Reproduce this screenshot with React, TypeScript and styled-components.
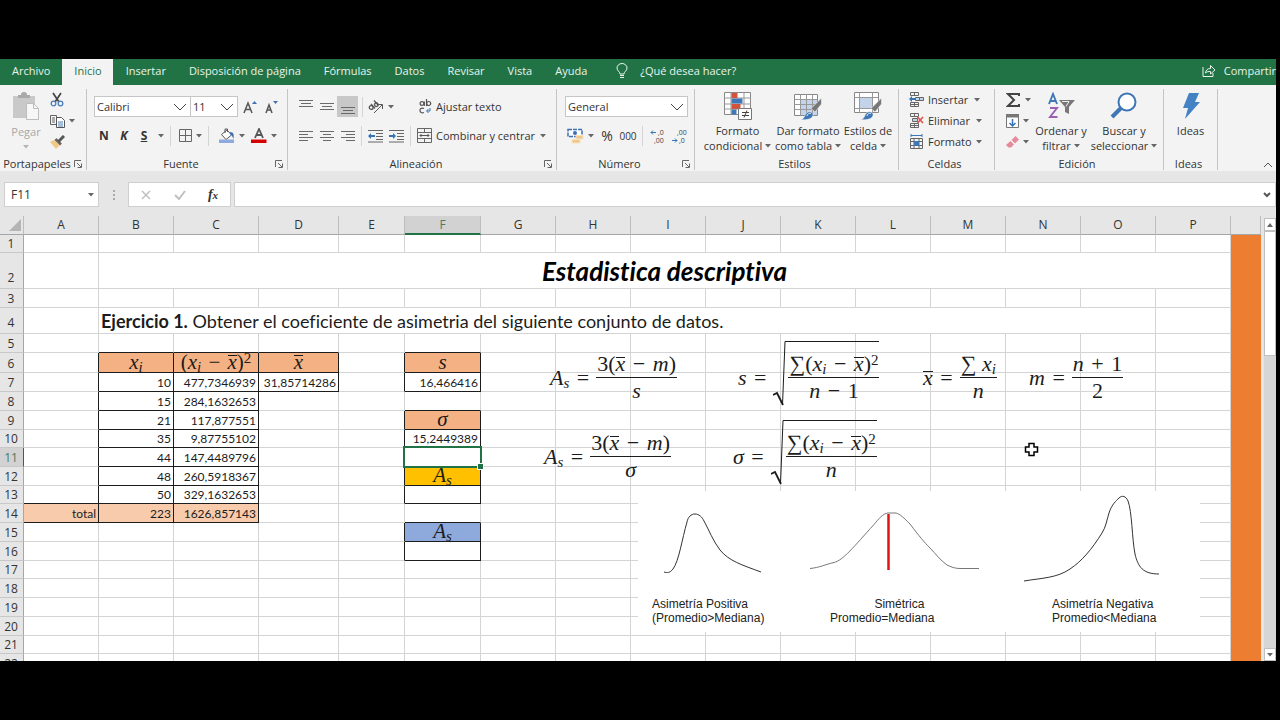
import React from "react";
import styled, { createGlobalStyle, css } from "styled-components";

const Global = createGlobalStyle`
  * { box-sizing: border-box; }
  body { margin: 0; background: #000; }
  button, input, select { font: inherit; color: inherit; margin: 0; }
`;

const UI = `"Open Sans", "Noto Sans", sans-serif`;
const SHEET = `Lato, "Open Sans", sans-serif`;
const MATH = `"Liberation Serif", "DejaVu Serif", serif`;

/* ---------- frame ---------- */

const Frame = styled.div`
  height: 100vh;
  display: flex;
  flex-direction: column;
  padding: 59px 4px 59px 0;
  background: #000;
  color: #333;
  font-family: ${UI};
  font-size: 11px;
  overflow: hidden;
`;

const TabBar = styled.nav`
  display: flex;
  flex: none;
  height: 26px;
  background: #217346;
  color: #e8f3ec;
`;

const Tab = styled.button<{ $active?: boolean }>`
  border: 0;
  padding: 0 11px 2px 12px;
  margin: ${(p) => (p.$active ? "0 1px" : "0")};
  line-height: 24px;
  white-space: nowrap;
  background: ${(p) => (p.$active ? "#f3f3f3" : "transparent")};
  color: ${(p) => (p.$active ? "#217346" : "inherit")};
`;

const Hint = styled.button`
  display: flex;
  align-items: center;
  gap: 12px;
  border: 0;
  padding: 0 0 3px;
  margin-left: 18px;
  background: transparent;
  white-space: nowrap;
`;

const Share = styled(Hint)`
  gap: 8px;
  margin-left: auto;
`;

/* ---------- ribbon ---------- */

const Ribbon = styled.div`
  display: flex;
  flex: none;
  height: 86px;
  padding: 4px 0 1px;
  background: #f3f3f3;
`;

const Group = styled.section<{ $w: number }>`
  display: flex;
  flex-direction: column;
  width: ${(p) => p.$w}px;
  border-right: 1px solid #c4c4c4;
`;

const GroupBody = styled.div<{ $pad?: number; $dir?: "row" | "column" }>`
  flex: 1;
  display: flex;
  flex-direction: ${(p) => p.$dir ?? "row"};
  padding: 0 0 0 ${(p) => p.$pad ?? 0}px;
`;

const GroupFoot = styled.div`
  display: flex;
  align-items: center;
  height: 13px;
  padding-right: 4px;
  line-height: 13px;
`;

const GroupName = styled.span`
  flex: 1;
  text-align: center;
  white-space: nowrap;
`;

const Plain = styled.button<{ $w?: number; $on?: boolean }>`
  display: flex;
  align-items: center;
  justify-content: center;
  flex: none;
  gap: 4px;
  width: ${(p) => (p.$w ? p.$w + "px" : "auto")};
  height: 21px;
  border: 0;
  padding: 0;
  white-space: nowrap;
  background: ${(p) => (p.$on ? "#c8c8c8" : "transparent")};
`;

const Line = styled.div<{ $top?: number }>`
  display: flex;
  align-items: center;
  height: 21px;
  margin-top: ${(p) => p.$top ?? 0}px;
`;

const Rule = styled.span<{ $l?: number; $r?: number }>`
  width: 1px;
  height: 20px;
  flex: none;
  margin: 0 ${(p) => p.$r ?? 4}px 0 ${(p) => p.$l ?? 4}px;
  background: #d4d4d4;
`;

const Stack = styled.div<{ $w?: number }>`
  display: flex;
  flex-direction: column;
  align-items: flex-start;
  flex: none;
  width: ${(p) => (p.$w ? p.$w + "px" : "auto")};
`;

const SplitLine = styled(Plain)`
  gap: 4px;
  justify-content: flex-start;
`;

const Big = styled.button<{ $w: number; $muted?: boolean }>`
  display: flex;
  flex-direction: column;
  align-items: center;
  flex: none;
  width: ${(p) => p.$w}px;
  border: 0;
  padding: 3px 0 0;
  background: transparent;
  line-height: 15px;
  white-space: nowrap;
  ${(p) => p.$muted && css`color: #a8a8a8;`}
`;

const BigLabel = styled.span`
  margin-top: 3px;
`;

const BigRow = styled.span`
  display: flex;
  align-items: center;
  gap: 3px;
  min-height: 15px;
`;

const Letter = styled.span<{ $kind: "bold" | "italic" | "underline" }>`
  font-weight: 700;
  font-size: 12px;
  font-style: ${(p) => (p.$kind === "italic" ? "italic" : "normal")};
  text-decoration: ${(p) => (p.$kind === "underline" ? "underline" : "none")};
`;

const Zeros = styled.span`
  font-size: 10px;
`;

const Percent = styled.span`
  font-size: 14px;
`;

const Picker = styled.label<{ $w: number }>`
  position: relative;
  display: flex;
  align-items: center;
  width: ${(p) => p.$w}px;
  height: 21px;
  margin-right: -1px;
  border: 1px solid #c6c6c6;
  background: #fff;
  svg { position: absolute; right: 3px; pointer-events: none; }
`;

const PickerSelect = styled.select`
  appearance: none;
  width: 100%;
  height: 19px;
  border: 0;
  padding: 0 2px;
  background: transparent;
`;

const Corner = styled.button`
  align-self: flex-end;
  margin-left: auto;
  border: 0;
  padding: 0 3px 2px;
  background: transparent;
  line-height: 8px;
`;

/* ---------- formula bar ---------- */

const FormulaBar = styled.div`
  display: flex;
  flex: none;
  height: 45px;
  padding: 11px 0 9px 4px;
  background: #e6e6e6;
`;

const WhiteBox = styled.div<{ $w?: number }>`
  display: flex;
  align-items: center;
  flex: ${(p) => (p.$w ? "none" : "1")};
  width: ${(p) => (p.$w ? p.$w + "px" : "auto")};
  border: 1px solid #cfcfcf;
  background: #fff;
  padding-right: 4px;
`;

const BoxInput = styled.input`
  flex: 1;
  min-width: 0;
  border: 0;
  padding: 0 6px;
  font-size: 12px;
  background: transparent;
  outline: 0;
`;

const Dots = styled.span`
  width: 29px;
  display: flex;
  align-items: center;
  justify-content: center;
`;

const Gap = styled.span`
  width: 3px;
`;

const Fx = styled.span`
  font-family: ${MATH};
  font-style: italic;
  font-weight: 700;
  font-size: 14px;
  small { font-size: 11px; }
`;

/* ---------- sheet ---------- */

const Work = styled.main`
  flex: 1;
  min-height: 0;
  display: flex;
  background: #e6e6e6;
`;

const Canvas = styled.div`
  position: relative;
  flex: 1;
  min-width: 0;
  overflow: hidden;
  color: #1c1c1c;
`;

const Grid = styled.table`
  width: 100%;
  table-layout: fixed;
  border-collapse: separate;
  border-spacing: 0;
  background: #fff;
`;

const ColHead = styled.th<{ $on?: boolean }>`
  height: 19px;
  padding: 0;
  line-height: 16px;
  font-weight: 400;
  font-size: 12px;
  color: ${(p) => (p.$on ? "#4f7a62" : "#333")};
  background: ${(p) => (p.$on ? "#d2d2d2" : "#e6e6e6")};
  border-right: 1px solid #bdbdbd;
  border-bottom: ${(p) => (p.$on ? "2px solid #217346" : "1px solid #a6a6a6")};
`;

const SelectAll = styled(ColHead)`
  text-align: right;
  svg { display: block; margin: 0 2px 0 auto; }
`;

const RowHead = styled.th<{ $h: number; $on?: boolean }>`
  height: ${(p) => p.$h}px;
  padding: 0 1px ${(p) => (p.$h > 20 ? 2 : 0)}px 0;
  line-height: 17px;
  vertical-align: bottom;
  font-weight: 400;
  font-size: 12px;
  color: ${(p) => (p.$on ? "#4f7a62" : "#333")};
  background: ${(p) => (p.$on ? "#d2d2d2" : "#e6e6e6")};
  border-right: 1px solid ${(p) => (p.$on ? "#217346" : "#a6a6a6")};
  border-bottom: 1px solid #c8c8c8;
`;

const Cell = styled.td<{ $bg?: string; $r: string; $b: string; $mid?: boolean }>`
  position: relative;
  padding: 0 2px;
  font-family: ${SHEET};
  font-size: 12px;
  line-height: 17px;
  text-align: ${(p) => (p.$mid ? "center" : "right")};
  vertical-align: bottom;
  white-space: nowrap;
  font-variant-ligatures: none;
  background: ${(p) => p.$bg ?? "#fff"};
  border-right: 1px solid ${(p) => p.$r};
  border-bottom: 1px solid ${(p) => p.$b};
`;

const TitleText = styled.h1`
  margin: 0;
  font-size: 26px;
  line-height: 34px;
  font-style: italic;
  font-weight: 700;
  text-align: center;
  color: #000;
`;

const Statement = styled.p`
  margin: 0;
  font-size: 18px;
  line-height: 24px;
  text-align: left;
`;

const Selection = styled.span`
  position: absolute;
  inset: -2px;
  border: 2px solid #217346;
  z-index: 2;
  &::after {
    content: "";
    position: absolute;
    right: -3px;
    bottom: -3px;
    width: 5px;
    height: 5px;
    background: #217346;
    outline: 1px solid #fff;
  }
`;

/* ---------- math ---------- */

const MathText = styled.span`
  font-family: ${MATH};
  font-size: 22px;
  line-height: 17px;
  color: #1c1c1c;
  white-space: nowrap;
  i { font-style: italic; }
  sub, sup { font-size: 15px; line-height: 0; }
  sub { vertical-align: -3px; }
  sup { vertical-align: 6px; font-style: normal; }
`;

const HeadMath = styled(MathText)`
  display: block;
  height: 18px;
  font-size: 21px;
`;

const Op = styled.span`
  margin: 0 2px;
`;

const Bar = styled.i`
  border-top: 1px solid currentColor;
  display: inline-block;
  line-height: 12px;
  height: 14px;
`;

const Equation = styled(MathText)<{ $x: number; $y: number }>`
  position: absolute;
  left: ${(p) => p.$x}px;
  top: ${(p) => p.$y}px;
  display: flex;
  align-items: center;
  gap: 5px;
  line-height: 26px;
`;

const Lhs = styled.span<{ $root?: boolean }>`
  padding-top: ${(p) => (p.$root ? 8 : 0)}px;
`;

const Fraction = styled.span`
  display: flex;
  flex-direction: column;
  align-items: center;
`;

const Numer = styled.span`
  border-bottom: 1px solid #1c1c1c;
  padding: 0 1px;
`;

const Root = styled.span`
  display: flex;
`;

const Radicand = styled.span`
  border-top: 1px solid #1c1c1c;
  padding: 9px 0 0 1px;
  height: 65px;
`;

/* ---------- figure ---------- */

const Figure = styled.figure`
  position: absolute;
  left: 638px;
  top: 275px;
  width: 562px;
  height: 141px;
  margin: 0;
  background: #fff;
  font-family: "Liberation Sans", Arial, sans-serif;
  font-size: 12px;
  line-height: 14px;
  color: #222;
  svg { display: block; }
`;

const Captions = styled.figcaption`
  display: grid;
  grid-template-columns: 178px 222px 1fr;
  padding-left: 14px;
  justify-items: start;
  white-space: pre;
`;

const Caption = styled.span<{ $mid?: boolean }>`
  text-align: ${(p) => (p.$mid ? "right" : "left")};
`;

const Pointer = styled.svg`
  position: absolute;
  left: 1024px;
  top: 226px;
`;

/* ---------- scroll bar ---------- */

const Scroll = styled.div`
  display: flex;
  flex-direction: column;
  flex: none;
  width: 15px;
  padding: 2px 0 0 3px;
  background: #e6e6e6;
`;

const ScrollButton = styled.button`
  display: flex;
  align-items: center;
  justify-content: center;
  height: 13px;
  border: 1px solid #c0c0c0;
  padding: 0;
  background: #fff;
`;

const Track = styled.div`
  flex: 1;
  background: #d6d6d6;
`;

const Thumb = styled.div`
  height: 30%;
  border: 1px solid #c0c0c0;
  background: #fff;
`;

/* ---------- icons ---------- */

type IconProps = { w: number; h: number; children: React.ReactNode };
const Icon = ({ w, h, children }: IconProps) => (
  <svg width={w} height={h} viewBox={`0 0 ${w} ${h}`} fill="none" stroke="#555" aria-hidden="true">
    {children}
  </svg>
);

const Caret = ({ color = "#666" }: { color?: string }) => (
  <Icon w={6} h={4}>
    <path d="M0 0h6L3 3.5z" fill={color} stroke="none" />
  </Icon>
);

const Chevron = () => (
  <Icon w={14} h={8}>
    <path d="M1 1l6 6 6-6" stroke="#444" />
  </Icon>
);

const Launcher = () => (
  <Icon w={8} h={8}>
    <path d="M.5 7V.5H7M3 3l4 4M7.5 3.5v4h-4" stroke="#666" />
  </Icon>
);

const Lines = ({ rows }: { rows: [number, number, number][] }) => (
  <Icon w={14} h={14}>
    {rows.map(([x1, x2, y]) => (
      <path key={y} d={`M${x1} ${y}H${x2}`} stroke="#6a6a6a" />
    ))}
  </Icon>
);

const Clipboard = () => (
  <Icon w={28} h={29}>
    <path d="M1 4h22v22H1z" fill="#c9c9c9" stroke="none" />
    <path d="M6 6V3h3a3 3 0 0 1 6 0h3v3z" fill="#a9a9a9" stroke="none" />
    <path d="M14.500 11.500h7l5 5v11h-12z" fill="#f7f7f7" stroke="#bdbdbd" />
    <path d="M21.500 11.500v5h5" stroke="#bdbdbd" />
  </Icon>
);

const Scissors = () => (
  <Icon w={14} h={15}>
    <path d="M3 1l6 9M11 1L5 10" stroke="#444" strokeWidth="1.700" />
    <circle cx="3.500" cy="11.500" r="2.300" stroke="#4a7ebb" strokeWidth="1.300" />
    <circle cx="10.500" cy="11.500" r="2.300" stroke="#4a7ebb" strokeWidth="1.300" />
  </Icon>
);

const Copy = () => (
  <Icon w={15} h={14}>
    <path d="M.5 1.500h6v9h-6zM2 4h3M2 6h3M2 8h3" stroke="#666" />
    <path d="M6.500 3.500h5l3 3v7h-8z" fill="#fff" stroke="#555" />
    <path d="M8 8h5M8 10h5M8 12h5" stroke="#4a7ebb" />
  </Icon>
);

const Brush = () => (
  <Icon w={15} h={14}>
    <path d="M0 7l6-3 5 5-5 5z" fill="#f0c987" stroke="none" />
    <path d="M5.500 4l5.500 5.500" stroke="#666" strokeWidth="2.500" />
    <path d="M8.500 6.500L14 1" stroke="#555" strokeWidth="3" />
  </Icon>
);

const FontSize = ({ up }: { up: boolean }) => (
  <Icon w={14} h={14}>
    <path d={up ? "M1 13L5 3l4 10M2.500 9.500h5" : "M2 13l3-8 3 8M3 10h4"} strokeWidth="1.500" />
    <path d={up ? "M9 4l2.500-3L14 4z" : "M9 1h5l-2.500 3z"} fill="#3f6fb0" stroke="none" />
  </Icon>
);

const Borders = () => (
  <Icon w={13} h={13}>
    <path d="M.5.5h12v12H.5zM6.500.5v12M.5 6.500h12" stroke="#666" />
  </Icon>
);

const Fill = () => (
  <Icon w={16} h={15}>
    <path d="M2.500 6.500L8 2l4.500 5L7 11.500zM6 5V1h2.500v3" stroke="#555" fill="#fff" />
    <path d="M11 4c4 0 4 3 3.500 7-1-2-1.500-4-3.500-5z" fill="#3f6fb0" stroke="none" />
    <path d="M0 11.500h15v3.500H0z" fill="#8ea9db" stroke="none" />
  </Icon>
);

const FontColor = () => (
  <Icon w={16} h={15}>
    <path d="M4 10l4-9 4 9M5.500 7h5" stroke="#555" strokeWidth="1.800" />
    <path d="M0 11.500h15.500v3.500H0z" fill="#d40000" stroke="none" />
  </Icon>
);

const Orientation = () => (
  <Icon w={16} h={14}>
    <path d="M6 13l8-8M14.500 9V4.500H10" />
    <circle cx="3.200" cy="7.500" r="1.900" strokeWidth="1.300" />
    <path d="M3 4l4 4.500M6 .5l4.500 5" strokeWidth="1.300" />
    <circle cx="8.300" cy="4.800" r="1.800" strokeWidth="1.300" />
  </Icon>
);

const Indent = ({ out }: { out: boolean }) => (
  <Icon w={16} h={14}>
    <path d="M0 1.500h15M8 4.500h7M8 7.500h7M8 10.500h7M0 13h15" stroke="#666" />
    <path
      d={out ? "M0 7l3-3v2h4v2H3v2z" : "M7 7L4 4v2H0v2h4v2z"}
      fill="#3474b5"
      stroke="none"
    />
  </Icon>
);

const Wrap = () => (
  <Icon w={15} h={15}>
    <circle cx="5" cy="4.500" r="1.900" strokeWidth="1.200" />
    <path d="M7.300 2.500v4.500M9.500 0v7" strokeWidth="1.200" />
    <circle cx="11.700" cy="4.500" r="2" strokeWidth="1.200" />
    <path d="M7 9.500C4 8.500 3 10 3 11.500s1.500 3 4 2" strokeWidth="1.200" />
    <path d="M13 9v3h-3M11.500 10l-2 2 2 2" stroke="#3474b5" />
  </Icon>
);

const Merge = () => (
  <Icon w={15} h={15}>
    <path d="M.5.5h14v14H.5zM.5 4.500h14M.5 10.500h14M7.500.5v4M7.500 10.500v4" stroke="#666" />
    <path d="M3 7.500h9M4.500 6L3 7.500 4.500 9M10.500 6L12 7.500 10.500 9" stroke="#555" />
  </Icon>
);

const Money = () => (
  <Icon w={17} h={16}>
    <path d="M1 1.500h14v7H1z" fill="#fff" stroke="#3f6fb0" strokeWidth="1.500" strokeDasharray="4 1" />
    <circle cx="8" cy="5" r="2" fill="#3f6fb0" stroke="none" />
    <path d="M9 7.500h7v3.500H9zM5 11.500h8v3.500H5z" fill="#f0c78a" stroke="#f7e3c3" />
  </Icon>
);

const Decimals = ({ more }: { more: boolean }) => (
  <svg width="18" height="20" viewBox="0 0 18 20" aria-hidden="true">
    <g fill="#444" fontFamily="Open Sans, sans-serif" fontSize="7">
      <text x={more ? 9 : 7} y="9">{more ? ",0" : ",00"}</text>
      <text x={more ? 5 : 9} y="17">{more ? ",00" : ",0"}</text>
    </g>
    <path
      d={more ? "M7 6.500H2M4 4.500l-2 2 2 2" : "M2 14.500h5M5 12.500l2 2-2 2"}
      stroke="#3474b5"
      fill="none"
    />
  </svg>
);

const Conditional = () => (
  <Icon w={28} h={28}>
    <path d="M.5.5h26v22H.5z" fill="#fff" stroke="#888" />
    <path d="M.5 6h26M.5 12h26M.5 17h26M7 .5v22M20 .5v22" stroke="#999" />
    <path d="M7.500 1h6v5h-6zM7.500 12h9v5h-9z" fill="#d2523b" stroke="none" />
    <path d="M7.500 6.500h11v5h-11zM7.500 17.500h5v5h-5z" fill="#3f76b5" stroke="none" />
    <path d="M14.500 16.500h13v11h-13z" fill="#fff" stroke="#777" />
    <path d="M18 20.500h7M18 23.500h7M23 18.500l-3 7" stroke="#444" />
  </Icon>
);

const PaintTip = () => (
  <>
    <path d="M27.500 6v6l-6.500 8-4-3.500z" fill="#777" stroke="#f3f3f3" strokeWidth=".6" />
    <path d="M6 27.500c4 0 4-3 6-6 3-3.500 8-1 7 2-1 4-8 5-13 4z" fill="#3f76b5" stroke="#f3f3f3" strokeWidth=".6" />
    <path d="M13 24c0-2 2-3 4-2.500" stroke="#fff" strokeWidth=".8" />
  </>
);

const TableFormat = () => (
  <Icon w={28} h={28}>
    <path d="M.5 2.500h23v21H.5z" fill="#fff" stroke="#888" />
    <path d="M6 8h17v15H6z" fill="#c3d3ea" stroke="none" />
    <path d="M.5 7.500h23M.5 12.500h23M.5 17.500h23M6.500 2.500v21M12.500 2.500v21M18.500 2.500v21" stroke="#999" />
    <PaintTip />
  </Icon>
);

const CellStyle = () => (
  <Icon w={28} h={28}>
    <path d="M.5.5h24v20H.5z" fill="#fff" stroke="#888" />
    <path d="M.5 5.500h24M.5 16.500h24M5.500.5v20M18.500.5v20" stroke="#999" />
    <path d="M6 6h12v10H6z" fill="#c3d3ea" stroke="none" />
    <PaintTip />
  </Icon>
);

const CellOp = ({ kind }: { kind: "insert" | "remove" | "format" }) => (
  <Icon w={15} h={15}>
    {kind === "format" ? (
      <>
        <path d="M1.500 4.500h12v10h-12zM1.500 7.500h12M1.500 11.500h12M5 4.500v10M10 4.500v10" stroke="#666" />
        <path d="M5 7h5v5H5z" fill="#3f76b5" stroke="none" />
        <path d="M2 1.500h11M2 0v3M13 0v3" stroke="#3f76b5" />
      </>
    ) : (
      <>
        <path d="M1.500.5h8v3h-8zM5.500.5v3M1.500 10.500h8v4h-8zM1.500 12.500h8M5.500 10.500v4" stroke="#666" />
        <path
          d={kind === "insert" ? "M6.500 5.500h8v3h-8zM10.500 5.500v3" : "M3.500 5.500h5v3h-5z"}
          stroke="#666"
          fill="#c3d3ea"
        />
        {kind === "insert" ? (
          <path d="M0 7l3-3v2h4v2H3v2z" fill="#3474b5" stroke="none" />
        ) : (
          <path d="M8.500 4l5.500 6M14 4l-5.500 6" stroke="#d9534a" strokeWidth="1.600" />
        )}
      </>
    )}
  </Icon>
);

const Sigma = () => (
  <Icon w={15} h={14}>
    <path d="M13 3V1H2l6 6-6 6h11v-2" stroke="#444" strokeWidth="2" />
  </Icon>
);

const FillDown = () => (
  <Icon w={13} h={14}>
    <path d="M.5.5h12v13H.5z" fill="#fff" stroke="#777" />
    <path d="M0 0h13v3.500H0z" fill="#777" stroke="none" />
    <path d="M6.500 5v7M3.500 9l3 3 3-3" stroke="#3474b5" strokeWidth="1.500" />
  </Icon>
);

const Eraser = () => (
  <Icon w={13} h={12}>
    <path d="M5.500 4l4-4L13 3.500l-4 4z" fill="#e58a9b" stroke="none" />
    <path d="M4.500 5L8 8.500 5 11.500H2.500L0 9z" fill="#e58a9b" stroke="none" />
  </Icon>
);

const SortFilter = () => (
  <Icon w={28} h={28}>
    <path d="M2 12L6 2l4 10M3.500 9h5" stroke="#3f76b5" strokeWidth="1.900" />
    <path d="M3 16h7L3 25h7.500" stroke="#9a5fb5" strokeWidth="1.900" />
    <path d="M12 8h16l-6 7v7l-4-2v-5z" fill="#777" stroke="none" />
    <path d="M15 9.500h7l-3 5" stroke="#eee" strokeWidth="1" />
  </Icon>
);

const Magnifier = () => (
  <Icon w={28} h={28}>
    <circle cx="17" cy="10" r="8.500" fill="#fff" stroke="#3f76b5" strokeWidth="2" />
    <path d="M11 16L2 25" stroke="#3f76b5" strokeWidth="4" />
  </Icon>
);

const Bolt = () => (
  <Icon w={20} h={28}>
    <path d="M8 1h10l-4 9h5L4 27l3-11H2z" fill="#4383c4" stroke="none" />
  </Icon>
);

const Bulb = () => (
  <Icon w={12} h={16}>
    <path d="M4 12.500h4M4 14.500h4M4 11C4 8.500 1 8 1 5a5 4.500 0 0 1 10 0c0 3-3 3.500-3 6z" stroke="#e8f3ec" />
  </Icon>
);

const ShareIcon = () => (
  <Icon w={14} h={13}>
    <path d="M1 3v9.500h10V9" stroke="#e8f3ec" />
    <path d="M3.500 9c.5-3 2-4.500 5-4.500V1.500L13 6 8.500 10V7.500c-2 0-3.500 0-5 1.500z" stroke="#e8f3ec" />
  </Icon>
);

/* ---------- data ---------- */

const TABS = [
  "Archivo",
  "Inicio",
  "Insertar",
  "Disposición de página",
  "Fórmulas",
  "Datos",
  "Revisar",
  "Vista",
  "Ayuda",
];

const COLS: [string, number][] = [
  ["A", 75], ["B", 75], ["C", 85], ["D", 80], ["E", 66], ["F", 76], ["G", 75], ["H", 75],
  ["I", 75], ["J", 75], ["K", 75], ["L", 75], ["M", 75], ["N", 75], ["O", 75], ["P", 75],
];

const ROWS = [18, 36, 19, 26, 19, 20, 19, 19, 19, 18, 19, 19, 18, 19, 19, 19, 18, 19, 19, 19, 18, 19];

const ORANGE = "#f4b183";
const PEACH = "#f8cbad";
const LINE = "#d4d4d4";
const BLACK = "#1c1c1c";

type Entry = { v?: React.ReactNode; bg?: string; mid?: boolean };

const XBar = () => <Bar>x</Bar>;
const Minus = () => <Op> − </Op>;

const cells: Record<string, Entry> = {
  B6: { bg: ORANGE, mid: true, v: <HeadMath><i>x<sub>i</sub></i></HeadMath> },
  C6: { bg: ORANGE, mid: true, v: <HeadMath>(<i>x<sub>i</sub></i><Minus /><XBar />)<sup>2</sup></HeadMath> },
  D6: { bg: ORANGE, mid: true, v: <HeadMath><XBar /></HeadMath> },
  D7: { v: "31,85714286" },
  F6: { bg: ORANGE, mid: true, v: <HeadMath><i>s</i></HeadMath> },
  F7: { v: "16,466416" },
  F9: { bg: ORANGE, mid: true, v: <HeadMath><i>σ</i></HeadMath> },
  F10: { v: "15,2449389" },
  F11: { v: <Selection /> },
  F12: { bg: "#ffc000", mid: true, v: <HeadMath><i>A<sub>s</sub></i></HeadMath> },
  F13: {},
  F15: { bg: "#8ea9db", mid: true, v: <HeadMath><i>A<sub>s</sub></i></HeadMath> },
  F16: {},
  A14: { bg: PEACH, v: "total" },
  B14: { bg: PEACH, v: "223" },
  C14: { bg: PEACH, v: "1626,857143" },
};

const SERIES: [string, string][] = [
  ["10", "477,7346939"],
  ["15", "284,1632653"],
  ["21", "117,877551"],
  ["35", "9,87755102"],
  ["44", "147,4489796"],
  ["48", "260,5918367"],
  ["50", "329,1632653"],
];
SERIES.forEach(([x, d], i) => {
  cells[`B${i + 7}`] = { v: x };
  cells[`C${i + 7}`] = { v: d };
});

const name = (c: number, r: number) => (COLS[c] ? COLS[c][0] + r : "");
const boxed = (c: number, r: number) => name(c, r) in cells;

const SheetRow = ({ r, h }: { r: number; h: number }) => {
  const merged = r === 2 ? 15 : r === 4 ? 14 : 0;
  return (
    <tr>
      <RowHead scope="row" $h={h} $on={r === 11}>{r}</RowHead>
      {COLS.map(([id], c) => {
        if (merged && c > 1 && c <= merged) return null;
        if (merged && c === 1) {
          return (
            <Cell key={id} colSpan={merged} $r={LINE} $b={LINE}>
              {r === 2 ? (
                <TitleText>Estadistica descriptiva</TitleText>
              ) : (
                <Statement>
                  <b>Ejercicio 1.</b> Obtener el coeficiente de asimetria del siguiente conjunto de datos.
                </Statement>
              )}
            </Cell>
          );
        }
        const e = cells[name(c, r)];
        return (
          <Cell
            key={id}
            $bg={e?.bg}
            $mid={e?.mid}
            $r={boxed(c, r) || boxed(c + 1, r) ? BLACK : LINE}
            $b={boxed(c, r) || boxed(c, r + 1) ? BLACK : LINE}
          >
            {e?.v}
          </Cell>
        );
      })}
      <Cell $bg="#ed7d31" $r="#ed7d31" $b="#ed7d31" />
    </tr>
  );
};

const SumDev = () => (
  <>
    ∑(<i>x<sub>i</sub></i><Minus /><XBar />)<sup>2</sup>
  </>
);

const Radical = () => (
  <Icon w={14} h={65}>
    <path d="M0 54l4-2 6 12" stroke="#1c1c1c" strokeWidth="1.800" />
    <path d="M9.500 64L12 .5h2" stroke="#1c1c1c" />
  </Icon>
);

const Frac = ({ top, bottom }: { top: React.ReactNode; bottom: React.ReactNode }) => (
  <Fraction>
    <Numer>{top}</Numer>
    <span>{bottom}</span>
  </Fraction>
);

const Left = ({ root, children }: { root?: boolean; children: React.ReactNode }) => (
  <Lhs $root={root}>
    {children}
    <Op> =</Op>
  </Lhs>
);

const Arrowed = ({ w, icon }: { w: number; icon: React.ReactNode }) => (
  <Plain $w={w}>
    {icon}
    <Caret />
  </Plain>
);

const Foot = ({ label, launch }: { label: string; launch?: boolean }) => (
  <GroupFoot>
    <GroupName>{label}</GroupName>
    {launch && <Launcher />}
  </GroupFoot>
);

export default function App() {
  return (
    <Frame>
      <Global />
      <TabBar>
        {TABS.map((t) => (
          <Tab key={t} $active={t === "Inicio"}>{t}</Tab>
        ))}
        <Hint>
          <Bulb />
          ¿Qué desea hacer?
        </Hint>
        <Share>
          <ShareIcon />
          Compartir
        </Share>
      </TabBar>

      <Ribbon>
        <Group $w={87}>
          <GroupBody $pad={4}>
            <Big $w={44} $muted>
              <Clipboard />
              <BigLabel>Pegar</BigLabel>
              <BigRow><Caret color="#b5b5b5" /></BigRow>
            </Big>
            <Stack>
              <Plain $w={18} aria-label="Cortar"><Scissors /></Plain>
              <Arrowed w={28} icon={<Copy />} />
              <Plain $w={18} aria-label="Copiar formato"><Brush /></Plain>
            </Stack>
          </GroupBody>
          <Foot label="Portapapeles" launch />
        </Group>

        <Group $w={201}>
          <GroupBody $pad={7} $dir="column">
            <Line $top={7}>
              <Picker $w={97}>
                <PickerSelect aria-label="Fuente"><option>Calibri</option></PickerSelect>
                <Chevron />
              </Picker>
              <Picker $w={48}>
                <PickerSelect aria-label="Tamaño"><option>11</option></PickerSelect>
                <Chevron />
              </Picker>
              <Plain $w={25} aria-label="Aumentar tamaño"><FontSize up /></Plain>
              <Plain $w={18} aria-label="Disminuir tamaño"><FontSize up={false} /></Plain>
            </Line>
            <Line $top={8}>
              <Plain $w={20}><Letter $kind="bold">N</Letter></Plain>
              <Plain $w={20}><Letter $kind="italic">K</Letter></Plain>
              <Plain $w={20}><Letter $kind="underline">S</Letter></Plain>
              <Plain $w={14}><Caret /></Plain>
              <Rule $l={2} $r={5} />
              <Arrowed w={28} icon={<Borders />} />
              <Rule $l={4} $r={7} />
              <Arrowed w={32} icon={<Fill />} />
              <Arrowed w={32} icon={<FontColor />} />
            </Line>
          </GroupBody>
          <Foot label="Fuente" launch />
        </Group>

        <Group $w={269}>
          <GroupBody $pad={7}>
            <Stack>
              <Line $top={7}>
                <Plain $w={21}><Lines rows={[[0, 14, 0.5], [2, 12, 3.5], [0, 14, 6.5]]} /></Plain>
                <Plain $w={21}><Lines rows={[[0, 14, 3.5], [2, 12, 6.5], [0, 14, 9.5]]} /></Plain>
                <Plain $w={21} $on><Lines rows={[[0, 14, 7.5], [2, 12, 10.5], [0, 14, 13.5]]} /></Plain>
                <Rule />
                <Arrowed w={28} icon={<Orientation />} />
              </Line>
              <Line $top={8}>
                <Plain $w={21}><Lines rows={[[0, 14, 2.5], [0, 9, 5.5], [0, 14, 8.5], [0, 9, 11.5]]} /></Plain>
                <Plain $w={21}><Lines rows={[[0, 14, 2.5], [3, 11, 5.5], [0, 14, 8.5], [3, 11, 11.5]]} /></Plain>
                <Plain $w={21}><Lines rows={[[0, 14, 2.5], [5, 14, 5.5], [0, 14, 8.5], [5, 14, 11.5]]} /></Plain>
                <Rule $l={3} $r={3} />
                <Plain $w={21}><Indent out /></Plain>
                <Plain $w={21}><Indent out={false} /></Plain>
                <Rule $l={3} $r={6} />
              </Line>
            </Stack>
            <Stack>
              <Line $top={7}>
                <SplitLine><Wrap />Ajustar texto</SplitLine>
              </Line>
              <Line $top={8}>
                <SplitLine><Merge />Combinar y centrar</SplitLine>
                <Plain $w={16}><Caret /></Plain>
              </Line>
            </Stack>
          </GroupBody>
          <Foot label="Alineación" launch />
        </Group>

        <Group $w={138}>
          <GroupBody $pad={8} $dir="column">
            <Line $top={7}>
              <Picker $w={123}>
                <PickerSelect aria-label="Formato de número"><option>General</option></PickerSelect>
                <Chevron />
              </Picker>
            </Line>
            <Line $top={8}>
              <Arrowed w={31} icon={<Money />} />
              <Plain $w={22}><Percent>%</Percent></Plain>
              <Plain $w={20}><Zeros>000</Zeros></Plain>
              <Rule />
              <Plain $w={21}><Decimals more /></Plain>
              <Plain $w={21}><Decimals more={false} /></Plain>
            </Line>
          </GroupBody>
          <Foot label="Número" launch />
        </Group>

        <Group $w={204}>
          <GroupBody $pad={6}>
            <Big $w={73}>
              <Conditional />
              <BigLabel>Formato</BigLabel>
              <BigRow>condicional<Caret /></BigRow>
            </Big>
            <Big $w={68}>
              <TableFormat />
              <BigLabel>Dar formato</BigLabel>
              <BigRow>como tabla<Caret /></BigRow>
            </Big>
            <Big $w={52}>
              <CellStyle />
              <BigLabel>Estilos de</BigLabel>
              <BigRow>celda<Caret /></BigRow>
            </Big>
          </GroupBody>
          <Foot label="Estilos" />
        </Group>

        <Group $w={96}>
          <GroupBody $pad={10} $dir="column">
            <SplitLine><CellOp kind="insert" />Insertar<Plain as="span" $w={10}><Caret /></Plain></SplitLine>
            <SplitLine><CellOp kind="remove" />Eliminar<Plain as="span" $w={10}><Caret /></Plain></SplitLine>
            <SplitLine><CellOp kind="format" />Formato<Caret /></SplitLine>
          </GroupBody>
          <Foot label="Celdas" />
        </Group>

        <Group $w={169}>
          <GroupBody $pad={9}>
            <Stack $w={27}>
              <Arrowed w={28} icon={<Sigma />} />
              <Arrowed w={26} icon={<FillDown />} />
              <Arrowed w={26} icon={<Eraser />} />
            </Stack>
            <Big $w={60}>
              <SortFilter />
              <BigLabel>Ordenar y</BigLabel>
              <BigRow>filtrar<Caret /></BigRow>
            </Big>
            <Big $w={66}>
              <Magnifier />
              <BigLabel>Buscar y</BigLabel>
              <BigRow>seleccionar<Caret /></BigRow>
            </Big>
          </GroupBody>
          <Foot label="Edición" />
        </Group>

        <Group $w={54}>
          <GroupBody>
            <Big $w={53}>
              <Bolt />
              <BigLabel>Ideas</BigLabel>
            </Big>
          </GroupBody>
          <Foot label="Ideas" />
        </Group>
        <Corner aria-label="Contraer la cinta">
          <Icon w={10} h={6}>
            <path d="M1 5l4-4 4 4" />
          </Icon>
        </Corner>
      </Ribbon>

      <FormulaBar>
        <WhiteBox $w={95}>
          <BoxInput aria-label="Cuadro de nombres" defaultValue="F11" />
          <Caret />
        </WhiteBox>
        <Dots>
          <Icon w={2} h={12}>
            <path d="M1 1v2M1 5v2M1 9v2" stroke="#aaa" strokeWidth="2" />
          </Icon>
        </Dots>
        <WhiteBox $w={103}>
          <Plain $w={34} aria-label="Cancelar">
            <Icon w={10} h={10}><path d="M1 1l8 8M9 1L1 9" stroke="#c0c0c0" strokeWidth="1.500" /></Icon>
          </Plain>
          <Plain $w={34} aria-label="Introducir">
            <Icon w={12} h={10}><path d="M1 5l4 4 6-8" stroke="#c0c0c0" strokeWidth="2" /></Icon>
          </Plain>
          <Plain $w={32}>
            <Fx>f<small>x</small></Fx>
          </Plain>
        </WhiteBox>
        <Gap />
        <WhiteBox>
          <BoxInput aria-label="Barra de fórmulas" />
          <Icon w={8} h={6}>
            <path d="M1 1l3 3 3-3" strokeWidth="2" />
          </Icon>
        </WhiteBox>
      </FormulaBar>

      <Work>
        <Canvas>
          <Grid>
            <colgroup>
              <col width={24} />
              {COLS.map(([id, w]) => (
                <col key={id} width={w} />
              ))}
              <col />
            </colgroup>
            <thead>
              <tr>
                <SelectAll>
                  <Icon w={12} h={12}>
                    <path d="M12 0v12H0z" fill="#b4b4b4" stroke="none" />
                  </Icon>
                </SelectAll>
                {COLS.map(([id]) => (
                  <ColHead key={id} scope="col" $on={id === "F"}>{id}</ColHead>
                ))}
                <ColHead scope="col" aria-label="Q" />
              </tr>
            </thead>
            <tbody>
              {ROWS.map((h, i) => (
                <SheetRow key={i} r={i + 1} h={h} />
              ))}
            </tbody>
          </Grid>

          <Equation $x={550} $y={135}>
            <Left><i>A<sub>s</sub></i></Left>
            <Frac top={<>3(<XBar /><Minus /><i>m</i>)</>} bottom={<i>s</i>} />
          </Equation>
          <Equation $x={544} $y={214}>
            <Left><i>A<sub>s</sub></i></Left>
            <Frac top={<>3(<XBar /><Minus /><i>m</i>)</>} bottom={<i>σ</i>} />
          </Equation>
          <Equation $x={738} $y={125}>
            <Left root><i>s</i></Left>
            <Root>
              <Radical />
              <Radicand><Frac top={<SumDev />} bottom={<><i>n</i><Minus />1</>} /></Radicand>
            </Root>
          </Equation>
          <Equation $x={733} $y={204}>
            <Left root><i>σ</i></Left>
            <Root>
              <Radical />
              <Radicand><Frac top={<SumDev />} bottom={<i>n</i>} /></Radicand>
            </Root>
          </Equation>
          <Equation $x={923} $y={135}>
            <Left><XBar /></Left>
            <Frac top={<>∑ <i>x<sub>i</sub></i></>} bottom={<i>n</i>} />
          </Equation>
          <Equation $x={1029} $y={135}>
            <Left><i>m</i></Left>
            <Frac top={<><i>n</i><Op> + </Op>1</>} bottom="2" />
          </Equation>

          <Figure>
            <svg width="562" height="106" viewBox="638 490 562 106" fill="none" aria-hidden="true">
              <path
                d="M664 571c3 1 6 1 9-3 6-8 9-30 14-47 1-5 4-8 8-8s7 3 9 7c5 9 9 20 16 29 9 11 22 15 41 22"
                stroke="#333"
              />
              <path
                d="M810 567.500c10-1 15-4 24-6s20-16 40-38c5-6 9-11 14-11.500h8c4 1 8 5 14 11 9 12 14 18 20 24s10 12 17 17c4 2 8 3.500 13 3.500h19"
                stroke="#777"
              />
              <path d="M888.500 513v56" stroke="#dd1515" strokeWidth="2.500" />
              <path
                d="M1024 580c18-3 33-3 46-12 12-8 22-20 32-36 4-6 5-14 7-20 3-9 7-12 10-15 3-3 7-2 9 3 4 10 4 38 7 53 3 13 8 20 24 20"
                stroke="#333"
              />
            </svg>
            <Captions>
              <Caption>{"Asimetría Positiva\n(Promedio>Mediana)"}</Caption>
              <Caption $mid>{"Simétrica   \nPromedio=Mediana"}</Caption>
              <Caption>{"Asimetría Negativa\nPromedio<Mediana"}</Caption>
            </Captions>
          </Figure>

          <Pointer width="15" height="15" viewBox="0 0 15 15" aria-hidden="true">
            <path
              d="M5 1.500h5V5h3.500v5H10v3.500H5V10H1.500V5H5z"
              fill="#fff"
              stroke="#000"
              strokeWidth="1.500"
            />
          </Pointer>
        </Canvas>
        <Scroll>
          <ScrollButton aria-label="Subir">
            <Icon w={6} h={4}><path d="M0 4h6L3 0z" fill="#666" stroke="none" /></Icon>
          </ScrollButton>
          <Track><Thumb /></Track>
          <ScrollButton aria-label="Bajar"><Caret /></ScrollButton>
        </Scroll>
      </Work>
    </Frame>
  );
}
